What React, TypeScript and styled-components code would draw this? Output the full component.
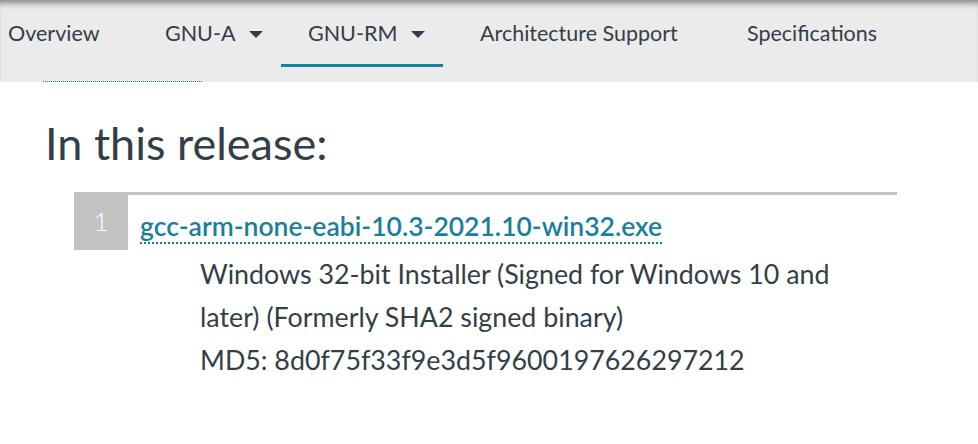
import React from "react";
import styled, { createGlobalStyle } from "styled-components";

const Global = createGlobalStyle`
  html, body { margin: 0; padding: 0; background: #fff; }
  body { font-family: "Lato", "Liberation Sans", sans-serif; }
`;

const Page = styled.div`
  width: 978px;
  height: 444px;
  overflow: hidden;
  background: #fff;
`;

const Nav = styled.nav`
  position: relative;
  height: 82px;
  background: #ebebeb;
  box-shadow: inset 0 7px 6px -4px rgba(0, 0, 0, 0.45);
  display: flex;
  align-items: stretch;
  padding-left: 8px;
  box-sizing: border-box;
  &::after {
    content: "";
    position: absolute;
    left: 43px;
    width: 159px;
    bottom: 0;
    border-bottom: 1px dotted #1a7f9c;
  }
`;

const NavItem = styled.div<{ $w: number; $pl: number; $active?: boolean }>`
  position: relative;
  width: ${(p) => p.$w}px;
  padding-left: ${(p) => p.$pl}px;
  box-sizing: border-box;
  display: flex;
  align-items: flex-start;
  padding-top: 20px;
  font-family: "Lato", sans-serif;
  font-size: 21.5px;
  color: #333e48;
  white-space: nowrap;
  flex-shrink: 0;
  &::after {
    content: "";
    display: ${(p) => (p.$active ? "block" : "none")};
    position: absolute;
    left: 0;
    right: 0;
    top: 64px;
    height: 3px;
    background: #1a7f9c;
  }
`;

const Caret = styled.span`
  display: inline-block;
  width: 0;
  height: 0;
  margin-left: 14px;
  margin-top: 11px;
  border-left: 7px solid transparent;
  border-right: 7px solid transparent;
  border-top: 7px solid #333e48;
`;

const Main = styled.main`
  padding-left: 45px;
`;

const Heading = styled.h2`
  margin: 0;
  padding-top: 31px;
  font-family: "Lato", sans-serif;
  font-weight: 400;
  font-size: 45px;
  line-height: 60px;
  color: #333e48;
`;

const List = styled.ol`
  list-style: none;
  margin: 19px 0 0 29px;
  padding: 0;
  width: 823px;
`;

const Item = styled.li`
  display: flex;
  align-items: flex-start;
`;

const Num = styled.div`
  flex: 0 0 54px;
  height: 58px;
  background: #c2c2c2;
  color: #fff;
  font-family: "Lato", sans-serif;
  font-weight: 300;
  font-size: 26px;
  display: flex;
  align-items: center;
  justify-content: center;
`;

const Body = styled.div`
  flex: 1;
  border-top: 3px solid #c2c2c2;
  padding-left: 12px;
`;

const FileLink = styled.a`
  display: inline-block;
  margin-top: 16px;
  font-family: "Lato", sans-serif;
  font-weight: 600;
  font-size: 26.5px;
  line-height: 31px;
  color: #1a7f9c;
  text-decoration: none;
  border-bottom: 2px dotted #1a7f9c;
`;

const Desc = styled.div`
  margin-top: 9px;
  padding-left: 60px;
  font-family: "Lato", sans-serif;
  font-size: 26.8px;
  line-height: 43px;
  color: #333e48;
`;

export default function App() {
  return (
    <Page>
      <Global />
      <Nav>
        <NavItem $w={130} $pl={0}>Overview</NavItem>
        <NavItem $w={143} $pl={27}>
          GNU-A<Caret />
        </NavItem>
        <NavItem $w={162} $pl={27} $active>
          GNU-RM<Caret />
        </NavItem>
        <NavItem $w={304} $pl={37}>Architecture Support</NavItem>
        <NavItem $w={200} $pl={0}>Specifications</NavItem>
      </Nav>
      <Main>
        <Heading>In this release:</Heading>
        <List>
          <Item>
            <Num>1</Num>
            <Body>
              <FileLink href="#">gcc-arm-none-eabi-10.3-2021.10-win32.exe</FileLink>
              <Desc>
                Windows 32-bit Installer (Signed for Windows 10 and
                <br />
                later) (Formerly SHA2 signed binary)
                <br />
                MD5: 8d0f75f33f9e3d5f9600197626297212
              </Desc>
            </Body>
          </Item>
        </List>
      </Main>
    </Page>
  );
}
